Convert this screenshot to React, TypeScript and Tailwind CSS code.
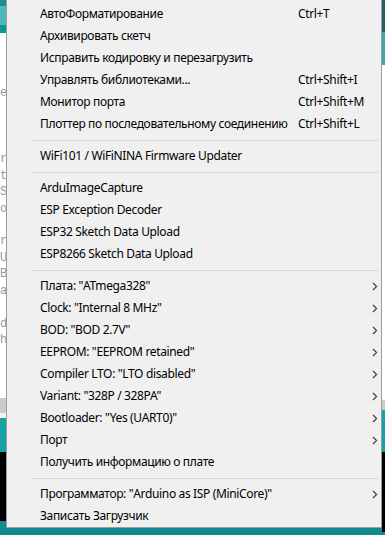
import React from "react";

type Item =
  | { kind: "item"; label: string; shortcut?: string; sub?: boolean }
  | { kind: "sep" };

const items: Item[] = [
  { kind: "item", label: "АвтоФорматирование", shortcut: "Ctrl+T" },
  { kind: "item", label: "Архивировать скетч" },
  { kind: "item", label: "Исправить кодировку и перезагрузить" },
  { kind: "item", label: "Управлять библиотеками...", shortcut: "Ctrl+Shift+I" },
  { kind: "item", label: "Монитор порта", shortcut: "Ctrl+Shift+M" },
  { kind: "item", label: "Плоттер по последовательному соединению", shortcut: "Ctrl+Shift+L" },
  { kind: "sep" },
  { kind: "item", label: "WiFi101 / WiFiNINA Firmware Updater" },
  { kind: "sep" },
  { kind: "item", label: "ArduImageCapture" },
  { kind: "item", label: "ESP Exception Decoder" },
  { kind: "item", label: "ESP32 Sketch Data Upload" },
  { kind: "item", label: "ESP8266 Sketch Data Upload" },
  { kind: "sep" },
  { kind: "item", label: "Плата: \"ATmega328\"", sub: true },
  { kind: "item", label: "Clock: \"Internal 8 MHz\"", sub: true },
  { kind: "item", label: "BOD: \"BOD 2.7V\"", sub: true },
  { kind: "item", label: "EEPROM: \"EEPROM retained\"", sub: true },
  { kind: "item", label: "Compiler LTO: \"LTO disabled\"", sub: true },
  { kind: "item", label: "Variant: \"328P / 328PA\"", sub: true },
  { kind: "item", label: "Bootloader: \"Yes (UART0)\"", sub: true },
  { kind: "item", label: "Порт", sub: true },
  { kind: "item", label: "Получить информацию о плате" },
  { kind: "sep" },
  { kind: "item", label: "Программатор: \"Arduino as ISP (MiniCore)\"", sub: true },
  { kind: "item", label: "Записать Загрузчик" },
];

const editorLines = ["", "", "", "e", "", "", "", "r", "t", "S", "o", "", "r", "U", "B", "a", "", "d", "h", "", "", ""];

function Chevron() {
  return (
    <svg width="6" height="9" viewBox="0 0 6 9" className="block">
      <path d="M1 1 L4.6 4.5 L1 8" fill="none" stroke="#3a3a3a" strokeWidth="1.1" />
    </svg>
  );
}

export default function App() {
  return (
    <div className="w-[385px] h-[535px] overflow-hidden flex bg-white font-['Segoe_UI','Noto_Sans',sans-serif]">
      {/* left background strip */}
      <div className="w-[6px] h-[535px] flex flex-col shrink-0 overflow-hidden">
        <div className="h-[6px] bg-[#178f93]" />
        <div className="h-[19px] bg-[#50b8bb]" />
        <div className="h-[8px] bg-[#0f9498]" />
        <div className="h-[365px] bg-white pt-[3px] flex flex-col items-end font-['Liberation_Mono',monospace] text-[12px] leading-[17px] text-[#9a9a9a]">
          {editorLines.map((c, i) => (
            <div key={i} className="h-[17px] w-[7px] mr-[-1px] overflow-hidden">
              {c}
            </div>
          ))}
        </div>
        <div className="h-[15px] bg-[#cbcbcb]" />
        <div className="h-[5px] bg-[#f4f4f4]" />
        <div className="h-[34px] bg-[#17a1a5]" />
        <div className="h-[69px] bg-black" />
        <div className="flex-1 bg-[#0f8a8e]" />
      </div>

      {/* menu column */}
      <div className="w-[376px] h-[535px] flex flex-col shrink-0">
        <div className="h-[528px] bg-[#f0f0f0] border-l border-r border-b border-[#9c9c9c] pt-[3px] text-[12px] tracking-[-0.35px] text-black">
          {items.map((it, i) =>
            it.kind === "sep" ? (
              <div key={i} className="h-[10px] flex items-center pl-[25px] pr-[2px]">
                <div className="h-px w-full bg-[#d5d5d5]" />
              </div>
            ) : (
              <div key={i} className="h-[22px] flex items-center pl-[33px] pr-[1px]">
                <span className="w-[258px] whitespace-nowrap">{it.label}</span>
                <span className="flex-1 whitespace-nowrap">{it.shortcut ?? ""}</span>
                <span className="w-[8px] flex justify-start">{it.sub ? <Chevron /> : null}</span>
              </div>
            )
          )}
        </div>
        <div className="flex-1 bg-[#0f8a8e]" />
      </div>

      {/* right background strip */}
      <div className="w-[3px] h-[535px] flex flex-col shrink-0">
        <div className="h-[32px] bg-[#2a5e61]" />
        <div className="h-[33px] bg-[#3ea6a9]" />
        <div className="h-[335px] bg-white" />
        <div className="h-[10px] bg-[#cbcbcb]" />
        <div className="h-[42px] bg-[#17a1a5]" />
        <div className="h-[80px] bg-black" />
        <div className="flex-1 bg-[#0f8a8e]" />
      </div>
    </div>
  );
}
